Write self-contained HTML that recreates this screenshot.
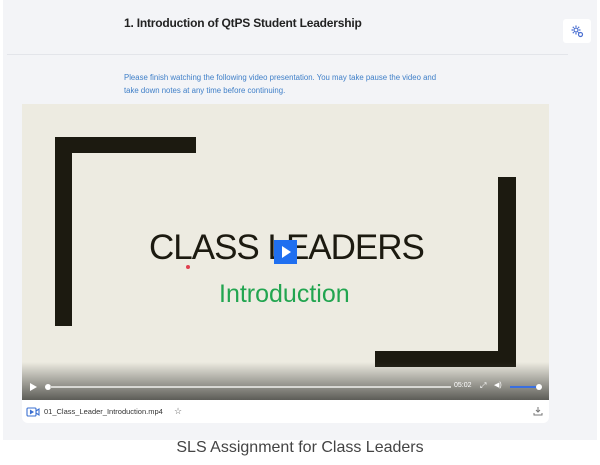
<!DOCTYPE html>
<html><head><style>
body{margin:0;width:600px;height:465px;background:#fff;font-family:"Liberation Sans",sans-serif;position:relative;overflow:hidden}
.panel{position:absolute;left:3px;top:0;width:594px;height:440px;background:#f3f4f7}
.abs{position:absolute}
.bar{position:absolute;background:#1c1a10}
</style></head><body>
<div class="panel"></div>
<div class="abs" style="left:124px;top:16px;font-size:12px;font-weight:bold;color:#222;letter-spacing:-0.2px">1. Introduction of QtPS Student Leadership</div>
<div class="abs" style="left:563px;top:19px;width:28px;height:24px;background:#fff;border-radius:3px"></div>
<svg class="abs" style="left:570px;top:24px" width="14" height="14" viewBox="0 0 14 14" fill="none" stroke="#4a6fd1" stroke-width="1.2"><circle cx="6" cy="6" r="2"/><path d="M6 1.5v1.5M6 9v1.5M1.5 6H3M9 6h1.5M2.8 2.8l1 1M8.2 8.2l1 1M2.8 9.2l1-1M8.2 3.8l1-1"/><circle cx="10.5" cy="10.5" r="2" fill="#fff"/></svg>
<div class="abs" style="left:7px;top:54px;width:561px;height:1px;background:#e3e5ea"></div>
<div class="abs" style="left:124px;top:71px;font-size:7.8px;line-height:13px;color:#3f7fc8;width:318px">Please finish watching the following video presentation. You may take pause the video and take down notes at any time before continuing.</div>
<div class="abs" style="left:22px;top:104px;width:527px;height:319px;background:#fff;border-radius:0 0 6px 6px;overflow:hidden">
 <div class="abs" style="left:0;top:0;width:527px;height:296px;background:#edebe1"></div>
 <div class="bar" style="left:33px;top:33px;width:141px;height:16px"></div>
 <div class="bar" style="left:33px;top:33px;width:17px;height:189px"></div>
 <div class="bar" style="left:476px;top:73px;width:18px;height:190px"></div>
 <div class="bar" style="left:353px;top:247px;width:141px;height:16px"></div>
 <div class="abs" style="left:127px;top:124px;font-size:35px;color:#1c1a10;letter-spacing:-1px">CLASS LEADERS</div>
 <div class="abs" style="left:197px;top:176px;font-size:25px;color:#22a550">Introduction</div>
 <div class="abs" style="left:164px;top:161px;width:4px;height:4px;border-radius:2px;background:#e04050"></div>
 <div class="abs" style="left:252px;top:136px;width:23px;height:24px;background:#1f6ff0"></div>
 <div class="abs" style="left:260px;top:142px;width:0;height:0;border-left:9px solid #fff;border-top:6px solid transparent;border-bottom:6px solid transparent"></div>
 <div class="abs" style="left:0;top:258px;width:527px;height:38px;background:linear-gradient(rgba(90,90,80,0),rgba(85,85,80,.95))"></div>
 <div class="abs" style="left:8px;top:279px;width:0;height:0;border-left:7px solid #fff;border-top:4px solid transparent;border-bottom:4px solid transparent"></div>
 <div class="abs" style="left:23px;top:280px;width:6px;height:6px;border-radius:3px;background:#fff"></div>
 <div class="abs" style="left:28px;top:282px;width:401px;height:1.5px;background:#d8d8d4"></div>
 <div class="abs" style="left:432px;top:278px;font-size:7px;color:#fff">05:02</div>
 <div class="abs" style="left:458px;top:277px;font-size:8px;color:#fff">⤢</div>
 <div class="abs" style="left:472px;top:277px;font-size:7px;color:#fff">◀)</div>
 <div class="abs" style="left:488px;top:282px;width:28px;height:2px;background:#3a6fe0"></div>
 <div class="abs" style="left:514px;top:280px;width:6px;height:6px;border-radius:3px;background:#fff"></div>
 <svg class="abs" style="left:4px;top:303px" width="14" height="10" viewBox="0 0 14 10" fill="none" stroke="#3a6fd0" stroke-width="1.1"><rect x="1" y="1" width="9" height="8" rx="1"/><path d="M10 4l3-2v6l-3-2"/><path d="M4.5 3.5v3l2.5-1.5z" fill="#3a6fd0"/></svg>
 <div class="abs" style="left:22px;top:303px;font-size:7.5px;color:#333">01_Class_Leader_Introduction.mp4</div>
 <div class="abs" style="left:152px;top:302px;font-size:9px;color:#666">☆</div>
 <svg class="abs" style="left:511px;top:302px" width="10" height="10" viewBox="0 0 10 10" fill="none" stroke="#777" stroke-width="1"><path d="M5 1v5M3 4l2 2 2-2M1 7v2h8V7"/></svg>
</div>
<div class="abs" style="left:0;width:600px;top:439px;text-align:center;font-size:16px;color:#444">SLS Assignment for Class Leaders</div>
</body></html>
